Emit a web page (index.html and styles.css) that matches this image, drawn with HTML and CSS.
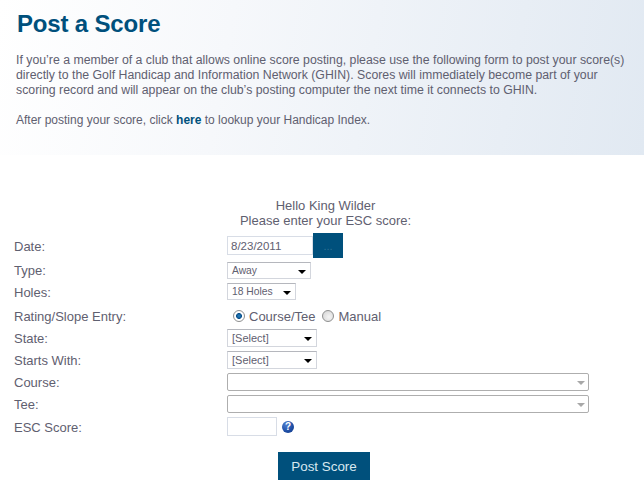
FILE: index.html
```html
<!DOCTYPE html>
<html lang="en">
<head>
<meta charset="utf-8">
<title>Post a Score</title>
<link rel="stylesheet" href="styles.css">
</head>
<body>
<header class="banner">
  <h1 class="title">Post a Score</h1>
  <p class="intro">If you’re a member of a club that allows online score posting, please use the following form to post your score(s) directly to the Golf Handicap and Information Network (GHIN). Scores will immediately become part of your scoring record and will appear on the club’s posting computer the next time it connects to GHIN.</p>
  <p class="intro intro-small">After posting your score, click <a class="link" href="#">here</a> to lookup your Handicap Index.</p>
</header>
<main class="form">
  <div class="greeting">Hello King Wilder<br>Please enter your ESC score:</div>
  <div class="row row-date">
    <label class="label label-low">Date:</label>
    <div class="field">
      <input class="input input-date" type="text" value="8/23/2011">
      <button class="picker" type="button">...</button>
    </div>
  </div>
  <div class="row row-type">
    <label class="label">Type:</label>
    <div class="field"><span class="select select-type">Away<i class="caret"></i></span></div>
  </div>
  <div class="row row-holes">
    <label class="label label-low">Holes:</label>
    <div class="field"><span class="select select-holes">18 Holes<i class="caret"></i></span></div>
  </div>
  <div class="row row-radio">
    <label class="label">Rating/Slope Entry:</label>
    <div class="field radios">
      <span class="radio radio-on"></span><span class="radio-text">Course/Tee</span>
      <span class="radio"></span><span class="radio-text">Manual</span>
    </div>
  </div>
  <div class="row row-state">
    <label class="label">State:</label>
    <div class="field"><span class="select select-state">[Select]<i class="caret"></i></span></div>
  </div>
  <div class="row row-state">
    <label class="label">Starts With:</label>
    <div class="field"><span class="select select-state">[Select]<i class="caret"></i></span></div>
  </div>
  <div class="row row-state">
    <label class="label">Course:</label>
    <div class="field"><span class="combo"><i class="caret caret-grey"></i></span></div>
  </div>
  <div class="row row-state">
    <label class="label">Tee:</label>
    <div class="field"><span class="combo"><i class="caret caret-grey"></i></span></div>
  </div>
  <div class="row row-esc">
    <label class="label label-low">ESC Score:</label>
    <div class="field">
      <input class="input input-esc" type="text">
      <span class="help">?</span>
    </div>
  </div>
  <div class="actions"><button class="submit" type="button">Post Score</button></div>
</main>
</body>
</html>
```
FILE: styles.css
```css
* { box-sizing: border-box; }
html, body { margin: 0; padding: 0; background: #fff; }
body {
  width: 644px;
  height: 489px;
  overflow: hidden;
  font-family: "Liberation Sans", Arial, sans-serif;
  font-size: 13px;
  color: #5f6070;
}
.banner {
  height: 155px;
  padding: 10px 16px 0 16px;
  background: linear-gradient(100deg, #fff 0%, #f6f8fb 35%, #e1e9f2 100%);
}
.title {
  margin: 0 0 15px 1px;
  font-size: 24px;
  line-height: 28px;
  letter-spacing: -0.17px;
  font-weight: bold;
  color: #00507c;
}
.intro {
  margin: 0 0 15px;
  font-size: 12.3px;
  line-height: 15px;
}
.intro-small { font-size: 12px; }
.link { color: #00507c; font-weight: bold; text-decoration: none; }

.form { padding: 43px 0 0 14px; }
.greeting {
  width: 623px;
  height: 30px;
  margin-bottom: 5px;
  line-height: 15px;
  text-align: center;
}
.row { display: flex; align-items: center; }
.label { width: 213px; flex: none; }
.label-low { padding-top: 2px; }
.field { display: flex; align-items: center; }
.row-date { height: 25px; margin-bottom: 4px; }
.row-type { height: 17px; margin-bottom: 4px; }
.row-holes { height: 17px; margin-bottom: 6px; }
.row-radio { height: 20px; margin-bottom: 3px; }
.row-state { height: 18px; margin-bottom: 4px; }
.row-esc { height: 19px; }

.input {
  height: 19px;
  padding: 0 3px;
  border: 1px solid #d8dde6;
  background: #fff;
  font: 11.5px "Liberation Sans", Arial, sans-serif;
  color: #5f6070;
}
.input-date { width: 86px; }
.input-esc { width: 50px; }
.picker {
  width: 30px;
  height: 25px;
  border: 0;
  padding: 0;
  background: #00507c;
  color: #2f7195;
  font: 11px "Liberation Sans", Arial, sans-serif;
}
.select {
  position: relative;
  display: block;
  height: 100%;
  padding-left: 4px;
  border: 1px solid #d3d6dd;
  border-top-color: #b5b7bd;
  font-size: 10.3px;
  line-height: 15px;
  color: #5f6070;
}
.select-type { width: 84px; height: 17px; }
.select-holes { width: 69px; height: 17px; }
.select-state { width: 90px; height: 18px; font-size: 11px; line-height: 16px; }
.caret {
  position: absolute;
  right: 4px;
  top: 7px;
  width: 0;
  height: 0;
  border-left: 4px solid transparent;
  border-right: 4px solid transparent;
  border-top: 4px solid #000;
}
.combo {
  position: relative;
  display: block;
  width: 362px;
  height: 18px;
  border: 1px solid #aeaeae;
  border-radius: 2px;
}
.caret-grey { right: 3px; top: 7px; border-top-color: #a8a8a8; }
.radios { padding-left: 6px; height: 20px; }
.radio {
  width: 12px;
  height: 12px;
  border-radius: 50%;
  border: 1px solid #8e8f8f;
  background: radial-gradient(circle at 60% 60%, #f4f4f4 0, #dcdcdc 70%);
}
.radio-on {
  background: radial-gradient(circle, #2a86c4 0, #0b4f8a 38%, #fff 45%, #fff 100%);
}
.radio-text { margin: 0 7px 0 4px; font-size: 13px; }
.help {
  width: 12px;
  height: 12px;
  margin-left: 5px;
  border-radius: 50%;
  background: radial-gradient(circle at 35% 30%, #4f7fd0 0, #1d4ca3 60%, #123a85 100%);
  color: #fff;
  font-size: 10px;
  font-weight: bold;
  line-height: 12px;
  text-align: center;
}
.actions { padding: 16px 0 0 264px; }
.submit {
  display: block;
  width: 92px;
  height: 28px;
  padding: 0;
  border: 0;
  background: #00507c;
  color: #d8e8f0;
  font: 13.4px "Liberation Sans", Arial, sans-serif;
}
```
